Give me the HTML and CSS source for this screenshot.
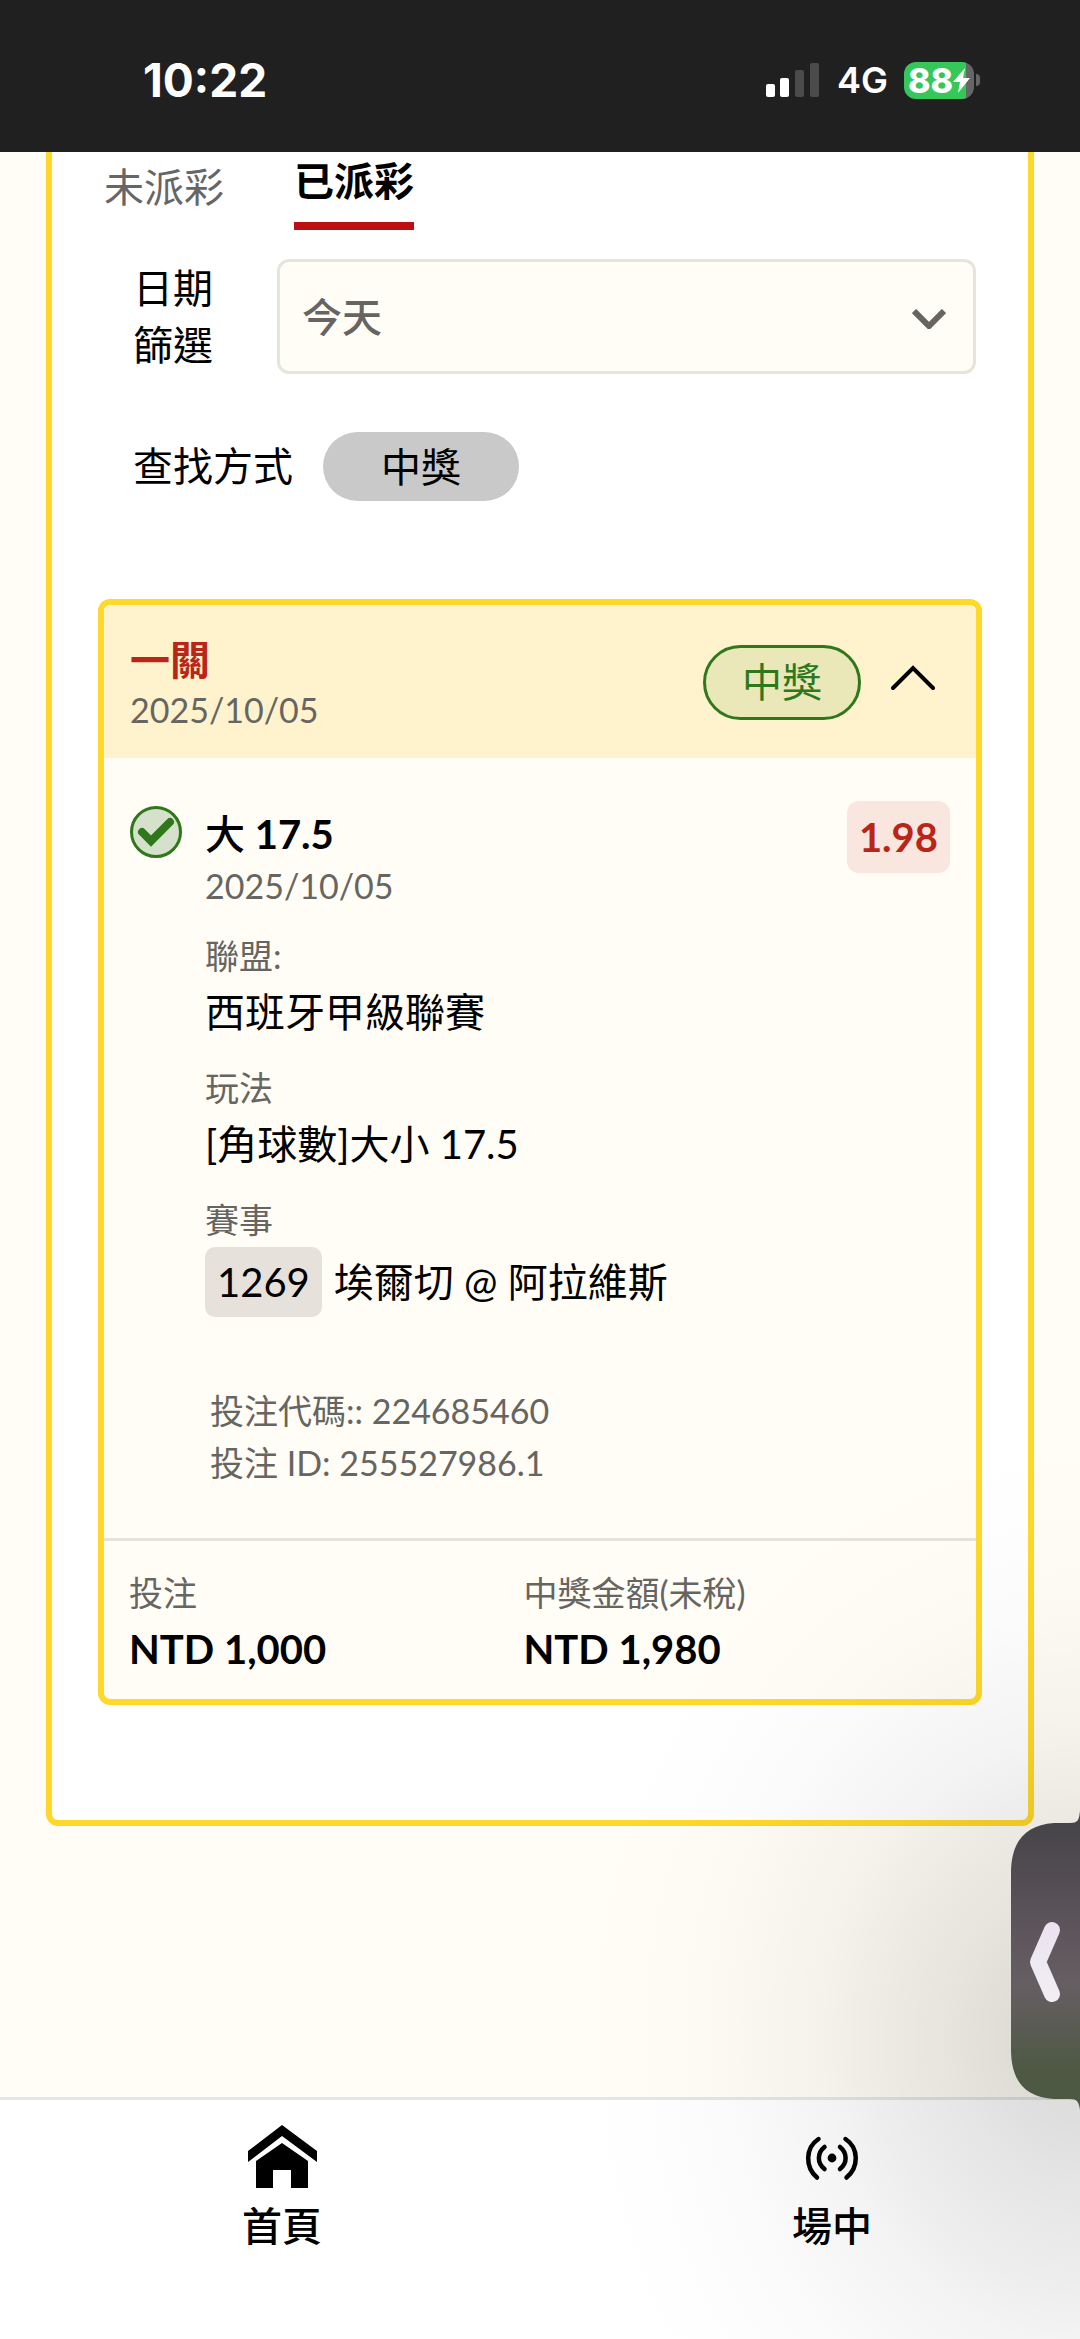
FILE: index.html
```html
<!DOCTYPE html>
<html lang="zh-Hant">
<head>
<meta charset="utf-8">
<meta name="viewport" content="width=device-width, initial-scale=1">
<title>已派彩</title>
<link rel="stylesheet" href="styles.css">
</head>
<body>
<div class="page">
  <header class="status">
    <span class="status-time">10:22</span>
    <div class="status-icons">
      <svg class="signal" viewBox="0 0 53 34" aria-hidden="true">
        <rect x="0" y="21" width="9" height="13" rx="2" fill="#fff"/>
        <rect x="14" y="15" width="9" height="19" rx="2" fill="#fff"/>
        <rect x="29" y="7" width="9" height="27" rx="2" fill="#4b4b4b"/>
        <rect x="44" y="0" width="9" height="34" rx="2" fill="#4b4b4b"/>
      </svg>
      <span class="network">4G</span>
      <div class="battery">
        <span class="battery-level">88</span>
        <svg class="bolt" viewBox="0 0 17 25" aria-hidden="true"><path d="M12 0 L0 14 H7 L5 25 L17 10 H10 Z" fill="#fff"/></svg>
      </div>
      <span class="battery-tip"></span>
    </div>
  </header>

  <main class="panel">
    <div class="tabs" role="tablist">
      <button class="tab" type="button" role="tab" aria-selected="false">未派彩</button>
      <button class="tab tab-active" type="button" role="tab" aria-selected="true">已派彩</button>
    </div>

    <div class="filter">
      <label class="filter-label filter-label-date" for="date">日期篩選</label>
      <div class="select-wrap">
        <select class="select" id="date"><option>今天</option></select>
        <svg class="select-arrow" viewBox="0 0 34 20" aria-hidden="true"><path d="M2 2 L17 17 L32 2" fill="none" stroke="#666562" stroke-width="6"/></svg>
      </div>
    </div>

    <div class="find">
      <span class="filter-label">查找方式</span>
      <button class="chip" type="button">中獎</button>
    </div>

    <section class="card">
      <header class="card-head">
        <div class="card-title">
          <h2 class="name">一關</h2>
          <time class="date">2025/10/05</time>
        </div>
        <span class="result">中獎</span>
        <button class="toggle" type="button" aria-label="收合">
          <svg class="toggle-icon" viewBox="0 0 44 34" aria-hidden="true"><path d="M2 23 L22 3 L42 23" fill="none" stroke="#000" stroke-width="4" stroke-linecap="round"/></svg>
        </button>
      </header>

      <div class="card-body">
        <svg class="check" viewBox="0 0 52 52" aria-hidden="true">
          <circle cx="26" cy="26" r="24.500" fill="#d6e1cb" stroke="#2f771b" stroke-width="3"/>
          <path d="M12 26 L21 35 L40 16" fill="none" stroke="#2f771b" stroke-width="8" stroke-linecap="round"/>
        </svg>
        <div class="detail">
          <h3 class="pick"><span class="pick-side">大</span> 17.5</h3>
          <time class="date">2025/10/05</time>
          <dl class="facts">
            <div class="fact"><dt class="term">聯盟:</dt><dd class="value">西班牙甲級聯賽</dd></div>
            <div class="fact"><dt class="term">玩法</dt><dd class="value">[角球數]大小 17.5</dd></div>
            <div class="fact"><dt class="term">賽事</dt><dd class="match"><span class="match-no">1269</span><span>埃爾切 @ 阿拉維斯</span></dd></div>
          </dl>
          <div class="ids">
            <p class="id">投注代碼:: 224685460</p>
            <p class="id">投注 ID: 255527986.1</p>
          </div>
        </div>
        <span class="odds">1.98</span>
      </div>

      <dl class="totals">
        <div><dt class="term">投注</dt><dd class="amount">NTD 1,000</dd></div>
        <div><dt class="term">中獎金額(未稅)</dt><dd class="amount">NTD 1,980</dd></div>
      </dl>
    </section>
  </main>

  <nav class="nav">
    <a class="nav-item" href="#home">
      <svg class="nav-icon" viewBox="0 0 70 64" aria-hidden="true">
        <path d="M1 26 L35 0 L70 26 V37 L35 11 L1 37 Z"/>
        <path d="M9 36 L35 18 L61 36 V63 H44 V45 H26 V63 H9 Z"/>
      </svg>
      <span>首頁</span>
    </a>
    <a class="nav-item" href="#live">
      <svg class="nav-icon" viewBox="0 0 70 64" aria-hidden="true">
        <circle cx="35" cy="33" r="4.4"/>
        <path d="M21.500 14 C8 23 8 42 20 52.500 M48.500 14 C62 23 62 42 49.500 52.500 M27.500 22 C20 28 20 38 27.500 44 M43 22 C50.500 28 50.500 38 43 44" fill="none" stroke="#000" stroke-width="4.500" stroke-linecap="round"/>
      </svg>
      <span>場中</span>
    </a>
  </nav>

  <div class="drawer-shade"></div>
  <button class="drawer" type="button" aria-label="展開">
    <svg class="drawer-shape" viewBox="0 0 69 302" aria-hidden="true">
      <defs>
        <linearGradient id="tab" x1="0" y1="0" x2="0" y2="1">
          <stop offset="0.040" stop-color="#464448"/>
          <stop offset="0.350" stop-color="#5b535a"/>
          <stop offset="0.580" stop-color="#655e62"/>
          <stop offset="0.690" stop-color="#5d5c57"/>
          <stop offset="0.860" stop-color="#4e5944"/>
          <stop offset="1" stop-color="#4c5840"/>
        </linearGradient>
        <linearGradient id="arrow" gradientUnits="userSpaceOnUse" x1="0" y1="110" x2="0" y2="192">
          <stop offset="0" stop-color="#ebe2f0"/>
          <stop offset="1" stop-color="#f1eff3"/>
        </linearGradient>
      </defs>
      <path d="M69 0 C68 9 67 12 59 12 H43 C14 14 0 31 0 62 V238 C0 270 14 286 43 288 H59 C66 288 68 291 69 299 Z" fill="url(#tab)"/>
      <path d="M41 119 L27 151 L41 183" fill="none" stroke="url(#arrow)" stroke-width="16" stroke-linecap="round" stroke-linejoin="round"/>
    </svg>
  </button>
</div>
</body>
</html>
```
FILE: styles.css
```css
* {
  box-sizing: border-box;
}

body {
  margin: 0;
  background: #fffdf5;
  color: #000;
  font-family: Lato, "Noto Sans CJK TC", sans-serif;
  font-size: 40px;
  line-height: 56px;
}

h2, h3, p, dl, dd {
  margin: 0;
}

button, select {
  font: inherit;
  color: inherit;
  padding: 0;
  border: 0;
  background: none;
}

svg {
  display: block;
  flex: none;
}

.page {
  position: relative;
  display: flex;
  flex-direction: column;
  min-height: 100vh;
}

/* Status bar */
.status {
  display: flex;
  justify-content: space-between;
  align-items: center;
  height: 152px;
  padding: 8px 100px 0 143px;
  background: #202020;
  color: #fff;
  font-family: Inter, sans-serif;
}

.status-time {
  font-size: 46px;
  font-weight: 700;
}

.status-icons {
  display: flex;
  align-items: center;
}

.signal {
  width: 53px;
  height: 34px;
}

.network {
  margin: 0 16px 0 18px;
  font-size: 36px;
  font-weight: 600;
}

.battery {
  display: flex;
  align-items: center;
  width: 70px;
  height: 37px;
  padding-left: 4px;
  border-radius: 12px;
  background: linear-gradient(to right, #35c759 62px, #666 62px);
}

.battery-level {
  font-size: 34px;
  font-weight: 800;
  line-height: 37px;
}

.bolt {
  width: 17px;
  height: 25px;
}

.battery-tip {
  width: 4px;
  height: 12px;
  margin-left: 2px;
  border-radius: 0 4px 4px 0;
  background: #666;
}

/* Panel */
.panel {
  margin: 0 46px 32px;
  padding-bottom: 115px;
  border: 6px solid #ffd829;
  border-top: 0;
  border-radius: 0 0 12px 12px;
  background: #fff;
}

.tabs {
  display: flex;
  gap: 70px;
  padding: 0 52px;
}

.tab {
  height: 78px;
  padding-bottom: 8px;
  color: #666;
  line-height: 58px;
}

.tab-active {
  padding-bottom: 12px;
  border-bottom: 8px solid #bd0f12;
  color: #000;
  font-weight: 700;
}

.filter {
  display: flex;
  align-items: center;
  gap: 64px;
  margin: 29px 52px 0 81px;
}

.filter-label {
  line-height: 57px;
}

.filter-label-date {
  width: 80px;
}

.select-wrap {
  position: relative;
  flex: 1;
}

.select {
  display: block;
  width: 100%;
  height: 115px;
  padding: 0 22px;
  border: 3px solid #e7e4dc;
  border-radius: 12px;
  appearance: none;
  background: #fffdf5;
  color: #666562;
  font-weight: 500;
}

.select-arrow {
  position: absolute;
  top: 50px;
  right: 30px;
  width: 34px;
  height: 20px;
  pointer-events: none;
}

.find {
  display: flex;
  align-items: center;
  gap: 30px;
  margin: 58px 52px 0 81px;
}

.chip {
  width: 196px;
  height: 69px;
  border-radius: 35px;
  background: #c9c9c9;
}

/* Bet card */
.card {
  margin: 98px 46px 0;
  border: 6px solid #ffd829;
  border-radius: 12px;
  background: #fffdf5;
}

.card-head {
  display: flex;
  align-items: center;
  gap: 30px;
  padding: 27px 41px 26px 26px;
  border-radius: 6px 6px 0 0;
  background: #fff3cd;
}

.card-title {
  flex: 1;
}

.name {
  color: #b92519;
  font-size: 40px;
  font-weight: 700;
}

.date,
.term {
  display: block;
  color: #666562;
  font-size: 34px;
  line-height: 44px;
}

.result {
  width: 158px;
  height: 75px;
  border: 3px solid #2f771b;
  border-radius: 38px;
  background: #eae7b9;
  color: #2f771b;
  line-height: 69px;
  text-align: center;
}

.toggle-icon {
  width: 44px;
  height: 34px;
}

.card-body {
  display: flex;
  align-items: flex-start;
  padding: 43px 26px 49px;
}

.check {
  width: 52px;
  height: 52px;
  margin: 5px 23px 0 0;
}

.detail {
  flex: 1;
  padding-top: 5px;
}

.pick {
  margin-bottom: 2px;
  font-size: 40px;
  font-weight: 700;
}

.pick-side {
  font-weight: 500;
}

.facts {
  display: grid;
  gap: 20px;
  margin-top: 26px;
}

.value,
.amount {
  line-height: 68px;
}

.match {
  display: flex;
  align-items: center;
  gap: 12px;
  margin-top: 5px;
}

.match-no {
  padding: 0 12px;
  border-radius: 10px;
  background: #e6e2db;
  line-height: 70px;
}

.ids {
  margin-top: 68px;
  padding-left: 5px;
}

.id {
  color: #666562;
  font-size: 34px;
  line-height: 52px;
}

.odds {
  padding: 0 12px;
  border-radius: 12px;
  background: #f8e6df;
  color: #b92519;
  font-weight: 700;
  line-height: 72px;
}

.totals {
  display: grid;
  grid-template-columns: 12fr 13fr;
  padding: 30px 25px 16px;
  border-top: 3px solid #e6e3dc;
}

.amount {
  font-weight: 700;
}

/* Bottom navigation */
.nav {
  display: flex;
  justify-content: space-between;
  margin-top: auto;
  padding: 25px 208px 85px 242px;
  border-top: 3px solid #e6e6e8;
  background: #fff;
}

.nav-item {
  display: flex;
  flex-direction: column;
  align-items: center;
  gap: 9px;
  color: #000;
  font-weight: 500;
  text-decoration: none;
}

.nav-icon {
  width: 70px;
  height: 64px;
}

/* Drawer handle floating over the page, with its soft shadow */
.drawer-shade {
  position: absolute;
  right: 0;
  bottom: 0;
  width: 520px;
  height: 920px;
  background: radial-gradient(520px 620px at 100% 621px, rgba(0, 0, 0, 0.14) 0%, rgba(0, 0, 0, 0.13) 13%, rgba(0, 0, 0, 0.095) 27%, rgba(0, 0, 0, 0.075) 37%, rgba(0, 0, 0, 0.045) 50%, rgba(0, 0, 0, 0.016) 70%, rgba(0, 0, 0, 0.004) 86%, rgba(0, 0, 0, 0) 100%);
  pointer-events: none;
}

.drawer {
  position: absolute;
  right: 0;
  bottom: 226px;
}

.drawer-shape {
  width: 69px;
  height: 302px;
}
```
